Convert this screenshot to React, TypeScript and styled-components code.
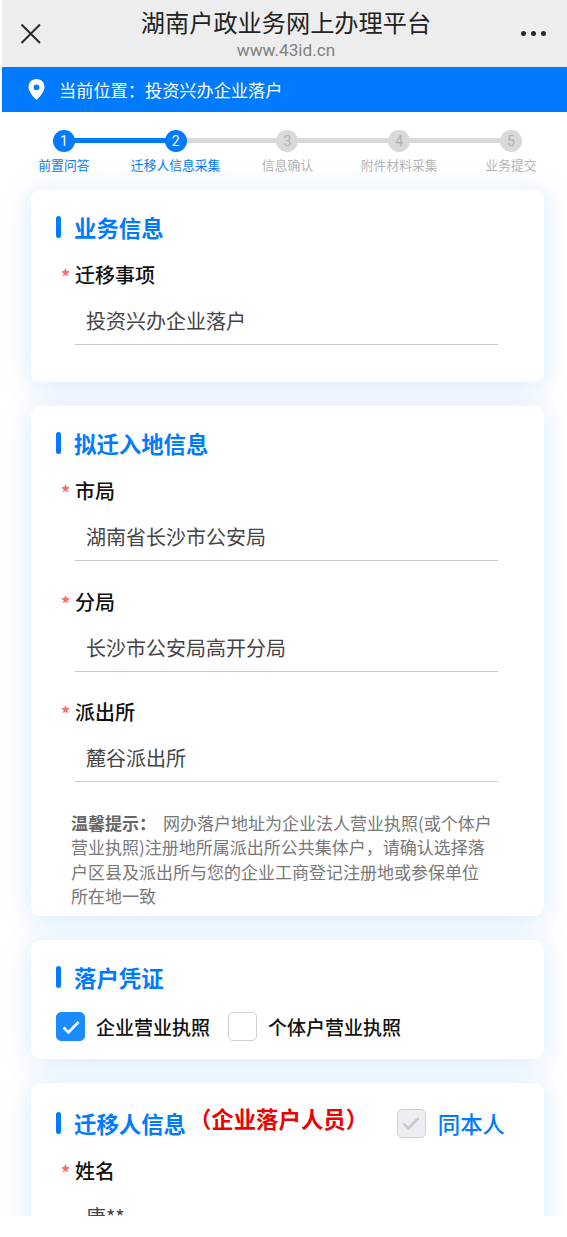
import React from "react";
import styled, { createGlobalStyle } from "styled-components";

const Global = createGlobalStyle`
  html, body { margin: 0; padding: 0; background: #fff; }
  * { box-sizing: border-box; }
  body { font-family: "Noto Sans CJK SC", "Noto Sans", sans-serif; }
`;
const Page = styled.div`
  height: 1216px;
  overflow: hidden;
  padding-left: 2px;
  background: #fff;
`;
const TopBar = styled.header`
  height: 67px;
  background: #ededed;
  display: grid;
  grid-template-columns: 52px 1fr 52px;
  align-items: center;
`;
const CloseBtn = styled.div`
  display: flex;
  padding-left: 17px;
`;
const TitleBox = styled.div`
  text-align: center;
  align-self: stretch;
  padding-left: 3px;
`;
const Title = styled.div`
  font-size: 24.2px;
  line-height: 30px;
  color: #222;
  margin-top: 7px;
`;
const Url = styled.div`
  font-family: "Roboto", sans-serif;
  font-size: 17.2px;
  line-height: 22px;
  color: #808080;
  margin-top: 2px;
`;
const More = styled.div`
  display: flex;
  gap: 5px;
  justify-content: flex-start;
  padding-left: 6px;
`;
const Dot = styled.span`
  width: 5px;
  height: 5px;
  border-radius: 50%;
  background: #2a2a2a;
`;
const LocBar = styled.div`
  height: 45px;
  background: #007aff;
  display: flex;
  align-items: center;
  padding-left: 26px;
  gap: 14px;
  color: #fff;
  font-size: 17.2px;
`;
const Steps = styled.div`
  display: grid;
  grid-template-columns: repeat(5, 111.75px);
  padding: 18px 0 0 6px;
  height: 78px;
`;
const Step = styled.div<{ $on: boolean; $lineOn: boolean; $last: boolean }>`
  position: relative;
  display: flex;
  flex-direction: column;
  align-items: center;
  color: ${(p) => (p.$on ? "#007aff" : "#b5b5b5")};
  &::after {
    content: "";
    display: ${(p) => (p.$last ? "none" : "block")};
    position: absolute;
    left: 50%;
    width: 100%;
    top: 8px;
    height: 5px;
    background: ${(p) => (p.$lineOn ? "#007aff" : "#d9d9d9")};
  }
`;
const StepNum = styled.div<{ $on: boolean }>`
  width: 22px;
  height: 22px;
  border-radius: 50%;
  position: relative;
  z-index: 1;
  background: ${(p) => (p.$on ? "#007aff" : "#d9d9d9")};
  color: ${(p) => (p.$on ? "#fff" : "#b0b0b0")};
  font-family: "Roboto", sans-serif;
  font-size: 14px;
  line-height: 22px;
  text-align: center;
`;
const StepLabel = styled.div`
  font-size: 12.8px;
  line-height: 18px;
  margin-top: 4px;
  white-space: nowrap;
`;
const Cards = styled.main`
  margin: 0 23px 0 29px;
  display: flex;
  flex-direction: column;
  gap: 24px;
`;
const Card = styled.section<{ $h?: number }>`
  background: #fff;
  border-radius: 9px;
  padding: 0 25px;
  box-shadow: 0 4px 32px rgba(0, 122, 255, 0.17);
  ${(p) => (p.$h ? `height: ${p.$h}px;` : "")}
`;
const CardHead = styled.div`
  display: flex;
  align-items: center;
  height: 30px;
  margin-top: 22px;
  color: #007aff;
  font-size: 22.4px;
  font-weight: 700;
  &::before {
    content: "";
    width: 5px;
    height: 22px;
    border-radius: 3px;
    background: #007aff;
    margin-right: 13px;
  }
`;
const Field = styled.div`
  margin-top: 18px;
  & + & { margin-top: 25.5px; }
`;
const Label = styled.div`
  font-size: 20px;
  line-height: 30px;
  font-weight: 500;
  color: #111;
  padding-left: 19px;
  position: relative;
  &::before {
    content: "*";
    color: #f56c6c;
    position: absolute;
    left: 5px;
    top: 1px;
    font-size: 18px;
    font-weight: 700;
  }
`;
const Value = styled.div`
  margin: 14px 21px 0 19px;
  height: 41px;
  padding-left: 11px;
  font-size: 20px;
  line-height: 34px;
  color: #444;
  border-bottom: 1px solid #c9c9c9;
  overflow: hidden;
`;
const Tip = styled.p`
  margin: 29px 27px 0 15px;
  font-size: 17px;
  line-height: 24.4px;
  color: #777;
`;
const TipKey = styled.b`
  font-weight: 700;
  color: #666;
  margin-right: 7px;
`;
const ChecksRow = styled.div`
  display: flex;
  align-items: center;
  margin-top: 20px;
`;
const Box = styled.span<{ $state: "on" | "off" | "disabled" }>`
  width: 29px;
  height: 29px;
  border-radius: 5px;
  flex: none;
  display: flex;
  align-items: center;
  justify-content: center;
  background: ${(p) => (p.$state === "on" ? "#1a8cff" : p.$state === "disabled" ? "#edeef1" : "#fff")};
  border: 1px solid ${(p) => (p.$state === "on" ? "#1a8cff" : "#d0d0d0")};
`;
const CheckText = styled.span`
  font-size: 19px;
  font-weight: 500;
  color: #111;
  margin: 0 18px 0 11px;
`;
const PersonHead = styled(CardHead)`
  white-space: nowrap;
  margin-top: 25px;
`;
const Red = styled.span`
  color: #f00000;
  font-size: 22.4px;
  font-weight: 700;
  margin-top: -10px;
  margin-left: 3px;
`;
const SameWrap = styled.div`
  margin-left: auto;
  margin-right: 14px;
  display: flex;
  align-items: center;
  gap: 12px;
  font-weight: 500;
  font-size: 22.4px;
`;

const Check = ({ c }: { c: string }) => (
  <svg width="20" height="20" viewBox="0 0 20 20" fill="none">
    <path d="M2.5 10.5 7.5 15.5 17.5 5" stroke={c} strokeWidth="2.6" />
  </svg>
);

const steps = ["前置问答", "迁移人信息采集", "信息确认", "附件材料采集", "业务提交"];
const F = ({ label, value }: { label: string; value: string }) => (
  <Field>
    <Label>{label}</Label>
    <Value>{value}</Value>
  </Field>
);

export default function App() {
  return (
    <Page>
      <Global />
      <TopBar>
        <CloseBtn>
          <svg width="24" height="24" viewBox="0 0 24 24" fill="none">
            <path d="M2.5 2.5 21 21M21 2.5 2.5 21" stroke="#2a2a2a" strokeWidth="2" />
          </svg>
        </CloseBtn>
        <TitleBox>
          <Title>湖南户政业务网上办理平台</Title>
          <Url>www.43id.cn</Url>
        </TitleBox>
        <More>
          <Dot />
          <Dot />
          <Dot />
        </More>
      </TopBar>
      <LocBar>
        <svg width="17" height="21" viewBox="0 0 17 21">
          <path
            fillRule="evenodd"
            fill="#fff"
            d="M8.5 0C3.8 0 .5 3.6.5 8c0 4.6 4.6 10 8 13 3.4-3 8-8.4 8-13 0-4.4-3.3-8-8-8Zm0 5.4a2.9 2.9 0 1 1 0 5.8 2.9 2.9 0 0 1 0-5.8Z"
          />
        </svg>
        当前位置：投资兴办企业落户
      </LocBar>
      <Steps>
        {steps.map((s, i) => (
          <Step key={s} $on={i < 2} $lineOn={i === 0} $last={i === 4}>
            <StepNum $on={i < 2}>{i + 1}</StepNum>
            <StepLabel>{s}</StepLabel>
          </Step>
        ))}
      </Steps>
      <Cards>
        <Card $h={192}>
          <CardHead>业务信息</CardHead>
          <F label="迁移事项" value="投资兴办企业落户" />
        </Card>
        <Card $h={510}>
          <CardHead>拟迁入地信息</CardHead>
          <F label="市局" value="湖南省长沙市公安局" />
          <F label="分局" value="长沙市公安局高开分局" />
          <F label="派出所" value="麓谷派出所" />
          <Tip>
            <TipKey>温馨提示：</TipKey>网办落户地址为企业法人营业执照(或个体户营业执照)注册地所属派出所公共集体户，请确认选择落户区县及派出所与您的企业工商登记注册地或参保单位所在地一致
          </Tip>
        </Card>
        <Card $h={119}>
          <CardHead>落户凭证</CardHead>
          <ChecksRow>
            <Box $state="on">
              <Check c="#fff" />
            </Box>
            <CheckText>企业营业执照</CheckText>
            <Box $state="off" />
            <CheckText>个体户营业执照</CheckText>
          </ChecksRow>
        </Card>
        <Card>
          <PersonHead>
            迁移人信息
            <Red>（企业落户人员）</Red>
            <SameWrap>
              <Box $state="disabled">
                <Check c="#c8c9cc" />
              </Box>
              同本人
            </SameWrap>
          </PersonHead>
          <F label="姓名" value="唐**" />
        </Card>
      </Cards>
    </Page>
  );
}
